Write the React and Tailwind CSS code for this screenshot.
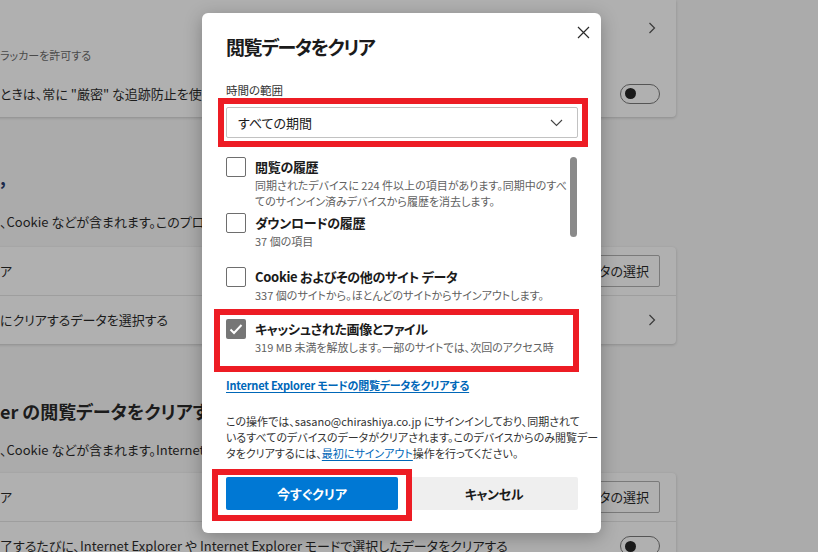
import React from "react";

const FONT = "font-['Noto_Sans_CJK_JP','Noto_Sans',sans-serif] [font-feature-settings:'palt']";

const Chevron = () => (
  <svg width="8" height="12" viewBox="0 0 8 12" className="mr-[4px]">
    <polyline points="1.5,1 6.5,6 1.5,11" fill="none" stroke="#3a3a3a" strokeWidth="1.2" />
  </svg>
);

const Toggle = () => (
  <div className="w-[40px] h-[20px] rounded-full border border-[#555] flex items-center pl-[4px]">
    <div className="w-[11px] h-[11px] rounded-full bg-[#1a1a1a]" />
  </div>
);

const BgButton = ({ children }) => (
  <div className="h-[32px] px-[10px] flex items-center border border-[#7a7a7a] rounded-[2px] text-[13px] text-[#1c1c1c]">
    {children}
  </div>
);

const Card = ({ children, className = "" }) => (
  <div className={`bg-[#b0b0b0] rounded-[4px] shadow-[0_1px_3px_rgba(0,0,0,0.18)] ${className}`}>
    {children}
  </div>
);

const Checkbox = ({ checked }) =>
  checked ? (
    <div className="w-[20px] h-[20px] shrink-0 rounded-[2px] bg-[#767676] flex items-center justify-center">
      <svg width="14" height="12" viewBox="0 0 14 12">
        <polyline points="1.5,6.5 5,10 12.5,2" fill="none" stroke="#fff" strokeWidth="2" />
      </svg>
    </div>
  ) : (
    <div className="w-[20px] h-[20px] shrink-0 rounded-[2px] border border-[#6e6e6e] bg-white" />
  );

const Item = ({ checked, title, desc, className = "" }) => (
  <div className={`flex gap-[9px] ${className}`}>
    <Checkbox checked={checked} />
    <div className="flex flex-col min-w-0">
      <div className="text-[13px] leading-[20px] tracking-[-0.3px] font-semibold text-[#1b1b1b] whitespace-nowrap">{title}</div>
      <div className="text-[11px] leading-[16px] text-[#616161] whitespace-nowrap">{desc}</div>
    </div>
  </div>
);

const Background = () => (
  <div className="flex flex-col w-[696px] -ml-[20px] text-[#1c1c1c]">
    <Card className="rounded-t-none flex flex-col pl-[20px] pr-[16px]">
      <div className="h-[44px] pt-[12px] flex items-center justify-end">
        <Chevron />
      </div>
      <div className="h-[22px] leading-[22px] text-[11px] text-[#4a4a4a]">ラッカーを許可する</div>
      <div className="h-[51px] pt-[4px] flex items-center justify-between">
        <span className="text-[13px] whitespace-nowrap">ときは、常に "厳密" な追跡防止を使用する</span>
        <Toggle />
      </div>
    </Card>
    <div className="pl-[20px] mt-[46px] h-[28px] leading-[28px] text-[18px] font-semibold text-[#1a2a4a]">,</div>
    <div className="pl-[20px] mt-[19px] h-[24px] leading-[24px] text-[13px] whitespace-nowrap">、Cookie などが含まれます。このプロファイルのみ</div>
    <Card className="mt-[13px] flex flex-col">
      <div className="h-[48px] pl-[20px] pr-[16px] flex items-center justify-between">
        <span className="text-[13px]">ア</span>
        <BgButton>閲覧データの選択</BgButton>
      </div>
      <div className="h-px bg-[#9e9e9e]" />
      <div className="h-[48px] pl-[20px] pr-[16px] flex items-center justify-between">
        <span className="text-[13px] whitespace-nowrap">にクリアするデータを選択する</span>
        <Chevron />
      </div>
    </Card>
    <div className="pl-[20px] mt-[53px] h-[28px] leading-[28px] text-[18px] font-semibold whitespace-nowrap">er の閲覧データをクリアする</div>
    <div className="pl-[20px] mt-[14px] h-[22px] leading-[22px] text-[13px] whitespace-nowrap">、Cookie などが含まれます。Internet Explorer</div>
    <Card className="mt-[12px] flex flex-col">
      <div className="h-[48px] pl-[20px] pr-[16px] flex items-center justify-between">
        <span className="text-[13px]">ア</span>
        <BgButton>閲覧データの選択</BgButton>
      </div>
      <div className="h-px bg-[#9e9e9e]" />
      <div className="h-[48px] pl-[20px] pr-[16px] flex items-center justify-between">
        <span className="text-[13px] whitespace-nowrap">了するたびに、Internet Explorer や Internet Explorer モードで選択したデータをクリアする</span>
        <Toggle />
      </div>
    </Card>
  </div>
);

const Dialog = () => (
  <div className="absolute left-[202px] top-[13px] w-[399px] h-[520px] bg-white rounded-[6px] shadow-[0_4px_18px_rgba(0,0,0,0.28)] flex flex-col pl-[24px] pr-[23px] pt-[20px]">
    <button className="absolute left-[374px] top-[12px] w-[14px] h-[14px] flex items-center justify-center">
      <svg width="13" height="13" viewBox="0 0 13 13">
        <path d="M1 1 L12 12 M12 1 L1 12" stroke="#2b2b2b" strokeWidth="1.2" fill="none" />
      </svg>
    </button>

    <h2 className="text-[19px] leading-[28px] tracking-[-1.4px] font-semibold text-[#1b1b1b]">閲覧データをクリア</h2>
    <div className="mt-[21px] text-[11.5px] leading-[16px] text-[#333]">時間の範囲</div>
    <div className="mt-[9px] h-[31px] border border-[#c2c2c2] rounded-[2px] flex items-center justify-between pl-[11px] pr-[14px]">
      <span className="text-[13px] text-[#1b1b1b]">すべての期間</span>
      <svg width="13" height="8" viewBox="0 0 13 8">
        <polyline points="1,1 6.5,6.5 12,1" fill="none" stroke="#444" strokeWidth="1.1" />
      </svg>
    </div>

    <div className="mt-[12px] h-[206px] overflow-hidden flex">
      <div className="flex-1 min-w-0 flex flex-col pr-[4px]">
        <Item
          className="mt-[7px]"
          title="閲覧の履歴"
          desc={<>同期されたデバイスに 224 件以上の項目があります。同期中のすべ<br />てのサインイン済みデバイスから履歴を消去します。</>}
        />
        <Item className="mt-[4px]" title="ダウンロードの履歴" desc="37 個の項目" />
        <Item className="mt-[18px]" title="Cookie およびその他のサイト データ" desc="337 個のサイトから。ほとんどのサイトからサインアウトします。" />
        <Item
          className="mt-[16px]"
          checked
          title="キャッシュされた画像とファイル"
          desc={<>319 MB 未満を解放します。一部のサイトでは、次回のアクセス時<br />に読み込みが遅くなる場合があります。</>}
        />
      </div>
      <div className="w-[7px] mr-[1px] shrink-0">
        <div className="mt-[7px] h-[80px] rounded-full bg-[#8a8a8a]" />
      </div>
    </div>

    <a className="mt-[21px] self-start text-[11px] leading-[16px] tracking-[-0.2px] font-semibold text-[#0067b8] underline underline-offset-2">
      Internet Explorer モードの閲覧データをクリアする
    </a>

    <p className="mt-[20px] text-[11px] leading-[16px] text-[#333] whitespace-nowrap">
      この操作では、sasano@chirashiya.co.jp にサインインしており、同期されて
      <br />
      いるすべてのデバイスのデータがクリアされます。このデバイスからのみ閲覧デー
      <br />
      タをクリアするには、
      <a className="text-[#0067b8] underline underline-offset-2">最初にサインアウト</a>
      操作を行ってください。
    </p>

    <div className="mt-[16px] flex gap-[12px]">
      <button className="w-[172px] h-[33px] rounded-[2px] bg-[#0078d4] text-white text-[13px] font-semibold">今すぐクリア</button>
      <button className="flex-1 h-[33px] rounded-[2px] bg-[#efefef] text-[#1b1b1b] text-[13px] tracking-[-0.3px] font-semibold">キャンセル</button>
    </div>

    {/* annotation boxes */}
    <div className="absolute left-[16px] top-[85px] w-[370px] h-[49px] border-[6px] border-[#ed1c24]" />
    <div className="absolute left-[12px] top-[296px] w-[365px] h-[63px] border-[6px] border-[#ed1c24]" />
    <div className="absolute left-[10px] top-[456px] w-[200px] h-[52px] border-[6px] border-[#ed1c24]" />
  </div>
);

export default function App() {
  return (
    <div className={`relative w-[818px] h-[552px] overflow-hidden bg-[#ababab] ${FONT}`}>
      <Background />
      <Dialog />
    </div>
  );
}
